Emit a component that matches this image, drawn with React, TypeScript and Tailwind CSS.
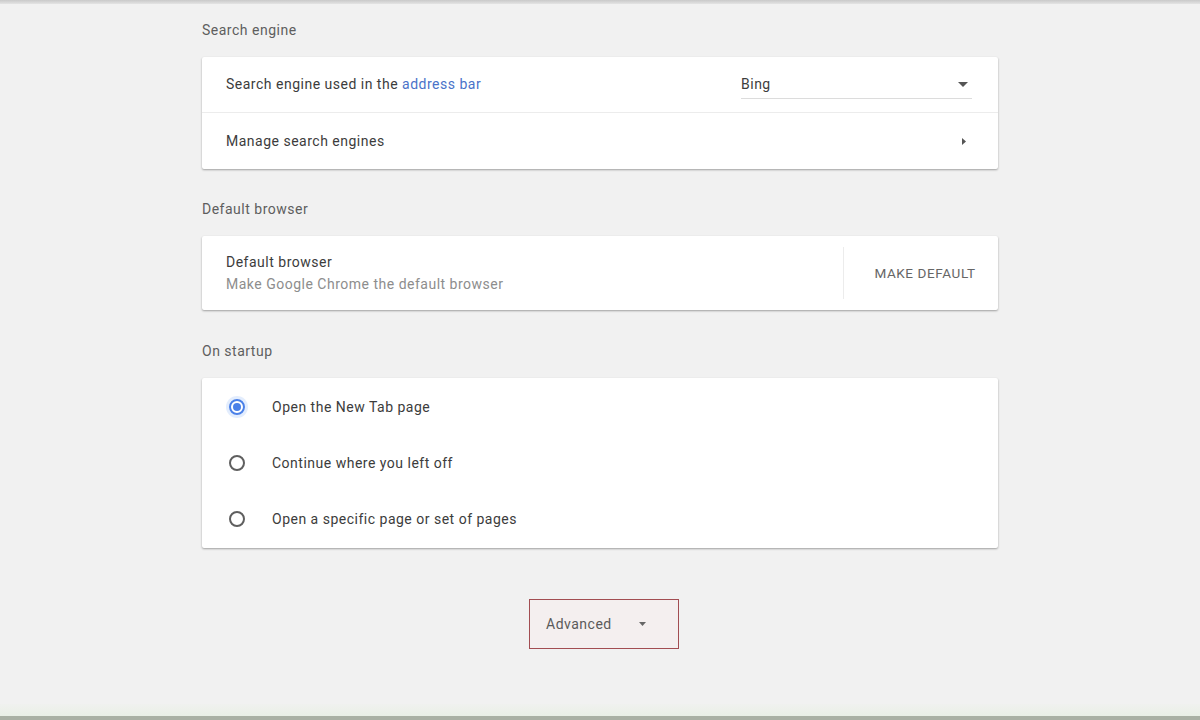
const font = { fontFamily: "Roboto, 'Noto Sans', Arial, sans-serif" };

const SectionLabel = ({ children }: { children: React.ReactNode }) => (
  <div className="h-[20px] leading-[20px] text-[14px] tracking-[0.5px] text-[#5e5e5e] mb-[17px]">{children}</div>
);

const Card = ({ children }: { children: React.ReactNode }) => (
  <div className="bg-white rounded-[2px] shadow-[0_1px_2px_rgba(0,0,0,0.28),0_1px_3px_rgba(0,0,0,0.08)]">
    {children}
  </div>
);

const Radio = ({ checked }: { checked?: boolean }) =>
  checked ? (
    <span className="w-[16px] h-[16px] rounded-full border-2 border-[#4a80e8] flex items-center justify-center shadow-[0_0_0_3px_rgba(66,133,244,0.15)]">
      <span className="w-[8px] h-[8px] rounded-full bg-[#4a80e8]" />
    </span>
  ) : (
    <span className="w-[16px] h-[16px] rounded-full border-2 border-[#5f5f5f]" />
  );

const startupOptions = [
  { label: "Open the New Tab page", checked: true },
  { label: "Continue where you left off" },
  { label: "Open a specific page or set of pages" },
];

export default function App() {
  return (
    <div className="min-h-[720px] h-[720px] bg-[#f1f1f1] flex flex-col text-[#3c3c3c] text-[14px] tracking-[0.5px]" style={font}>
      <div className="h-[4px] bg-gradient-to-b from-[#c9c9c9] to-[#e4e4e4]" />

      <div className="w-[796px] mx-auto pt-[16px]">
        <SectionLabel>Search engine</SectionLabel>
        <Card>
          <div className="h-[56px] flex items-center pl-[24px] pr-[26px] border-b border-[#ececec]">
            <div className="flex-1">
              Search engine used in the <span className="text-[#4a73c9]">address bar</span>
            </div>
            <div className="w-[231px] h-[28px] flex items-center justify-between border-b border-[#dcdcdc] pr-[4px]">
              <span className="text-[#3c3c3c]">Bing</span>
              <svg width="10" height="5" viewBox="0 0 10 5">
                <path d="M0 0h10L5 5z" fill="#555" />
              </svg>
            </div>
          </div>
          <div className="h-[56px] flex items-center pl-[24px] pr-[32px]">
            <div className="flex-1">Manage search engines</div>
            <svg width="4" height="7" viewBox="0 0 4 7">
              <path d="M0 0l4 3.5L0 7z" fill="#555" />
            </svg>
          </div>
        </Card>

        <div className="h-[30px]" />
        <SectionLabel>Default browser</SectionLabel>
        <Card>
          <div className="h-[74px] flex items-center pl-[24px]">
            <div className="flex-1 flex flex-col gap-[4px]">
              <span className="leading-[18px]">Default browser</span>
              <span className="leading-[18px] text-[#8d8d8d]">Make Google Chrome the default browser</span>
            </div>
            <div className="w-px h-[52px] bg-[#ececec]" />
            <div className="w-[154px] flex items-center justify-center pl-[8px] text-[13.5px] tracking-[0.6px] text-[#666]">
              MAKE DEFAULT
            </div>
          </div>
        </Card>

        <div className="h-[31px]" />
        <SectionLabel>On startup</SectionLabel>
        <Card>
          <div className="py-[1px]">
            {startupOptions.map(option => (
              <div key={option.label} className="h-[56px] flex items-center pl-[27px] gap-[27px]">
                <Radio checked={option.checked} />
                <span>{option.label}</span>
              </div>
            ))}
          </div>
        </Card>

        <div className="flex justify-center pl-[8px] mt-[51px]">
          <div className="w-[150px] h-[50px] border-[1.5px] border-[#a24d52] bg-[#f4efef] flex items-center pl-[16px] gap-[27px]">
            <span className="text-[#5a5a5a]">Advanced</span>
            <svg width="7" height="4" viewBox="0 0 7 4">
              <path d="M0 0h7L3.5 4z" fill="#666" />
            </svg>
          </div>
        </div>
      </div>

      <div className="flex-1" />
      <div className="h-[12px] bg-gradient-to-b from-[#f0f1ef] to-[#e9efe6]" />
      <div className="h-[4px] bg-[#a9b0a4]" />
    </div>
  );
}
